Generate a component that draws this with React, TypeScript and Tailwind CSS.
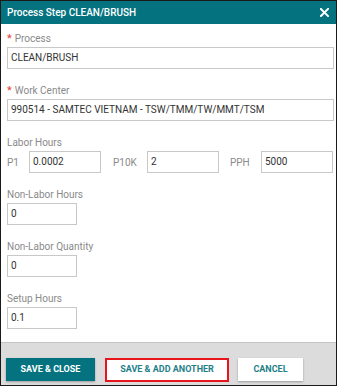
import React from "react";

const font = { fontFamily: "Roboto, 'Liberation Sans', sans-serif" };

function Label({ text, required }: { text: string; required?: boolean }) {
  return (
    <div className="h-[14px] leading-[14px] text-[10px] text-[#8a8a8a] mb-[1px] flex items-center">
      {required && <span className="text-[#e53935] mr-[3px] text-[11px]">*</span>}
      {text}
    </div>
  );
}

function Input({ value, className = "" }: { value: string; className?: string }) {
  return (
    <div
      className={`h-[22px] border border-[#c8c8c8] bg-white text-[10px] text-[#333] leading-[20px] pl-[3px] ${className}`}
    >
      {value}
    </div>
  );
}

export default function App() {
  return (
    <div style={font} className="w-[337px] h-[386px] bg-white border border-[#1a1a1a] flex flex-col overflow-hidden">
      <div className="h-[23px] bg-[#04737f] flex items-center justify-between pl-[6px] pr-[7px] shrink-0">
        <span className="text-white text-[10px] font-medium">Process Step CLEAN/BRUSH</span>
        <svg width="9" height="9" viewBox="0 0 10 10">
          <path d="M1 1L9 9M9 1L1 9" stroke="white" strokeWidth="2.2" strokeLinecap="square" />
        </svg>
      </div>
      <div className="flex-1 pl-[6px] pr-[2px] pt-[8px]">
        <Label text="Process" required />
        <Input value="CLEAN/BRUSH" />
        <div className="h-[15px]" />
        <Label text="Work Center" required />
        <Input value="990514 - SAMTEC VIETNAM - TSW/TMM/TW/MMT/TSM" />
        <div className="h-[15px]" />
        <Label text="Labor Hours" />
        <div className="flex items-center text-[10px] text-[#8a8a8a]">
          <span className="w-[22px]">P1</span>
          <Input value="0.0002" className="w-[72px]" />
          <span className="ml-[12px] w-[34px]">P10K</span>
          <Input value="2" className="w-[72px] bg-[#deeeee] border-[#b8c8c8]" />
          <span className="ml-[11px] w-[31px]">PPH</span>
          <Input value="5000" className="w-[72px]" />
        </div>
        <div className="h-[15px]" />
        <Label text="Non-Labor Hours" />
        <Input value="0" className="w-[70px]" />
        <div className="h-[15px]" />
        <Label text="Non-Labor Quantity" />
        <Input value="0" className="w-[70px]" />
        <div className="h-[15px]" />
        <Label text="Setup Hours" />
        <Input value="0.1" className="w-[70px]" />
      </div>
      <div className="h-[43px] shrink-0 bg-[#dcdcdc] border-t border-[#c4c4c4] flex items-start pt-[15px] pl-[5px] gap-[10px]">
        <button className="h-[23px] w-[89px] bg-[#04737f] text-white text-[9px] font-bold shadow-[0_1px_2px_rgba(0,0,0,0.3)]">
          SAVE &amp; CLOSE
        </button>
        <button className="h-[24px] w-[124px] bg-white text-[#1f7f89] text-[9px] font-bold border-2 border-[#e8141c]">
          SAVE &amp; ADD ANOTHER
        </button>
        <button className="h-[23px] w-[65px] ml-[-1px] bg-white text-[#1f7f89] text-[9px] font-bold shadow-[0_1px_2px_rgba(0,0,0,0.3)]">
          CANCEL
        </button>
      </div>
    </div>
  );
}
